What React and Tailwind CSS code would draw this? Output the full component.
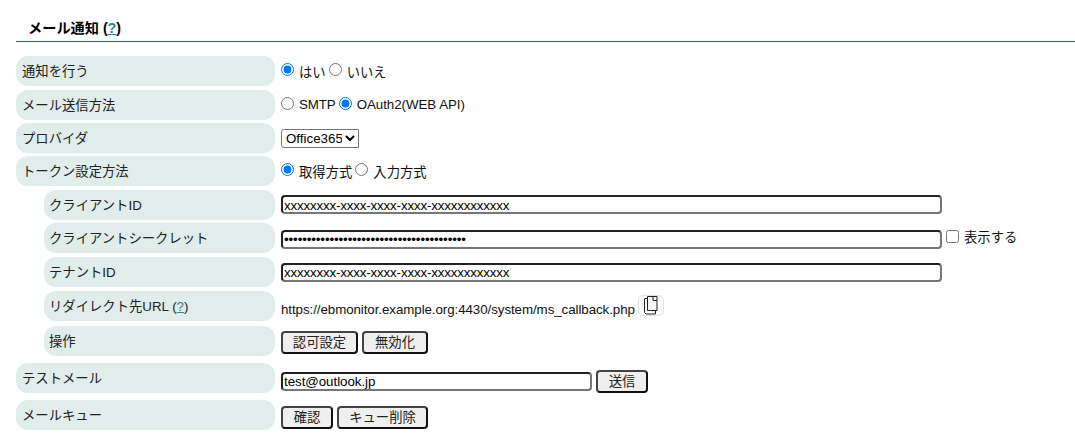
import React from 'react';

const fontStack = '[font-family:"Liberation_Sans","Noto_Sans_CJK_JP",sans-serif]';

const Help = () => <a href="#" className="text-[#1f8a94] underline">?</a>;

const Row = ({ label, sub, className = '', children }) => (
    <div className={`flex h-[30px] items-center ${className}`}>
        <div className={`h-full flex items-center rounded-[12px] bg-[#e0edeb] pt-[2px] text-[#222] ${sub ? 'ml-[28px] w-[231px] pl-[5px]' : 'w-[259px] pl-[6px]'}`}>
            {label}
        </div>
        <div className="ml-[6px] flex items-center text-[#111]">{children}</div>
    </div>
);

const Radio = ({ name, checked, className = '' }) => (
    <input type="radio" name={name} defaultChecked={checked} className={`h-[13px] w-[13px] ${className}`} />
);

const Btn = ({ children, className = '' }) => (
    <button className={`h-[23px] rounded-[4px] border-2 border-t-[#444] border-l-[#444] border-r-[#111] border-b-[#111] bg-[#efefef] text-[13.33px] text-[#222] ${className}`}>
        {children}
    </button>
);

const TextBox = ({ value, type = 'text', className = '' }) => (
    <input
        type={type}
        defaultValue={value}
        className={`h-[19px] rounded-[4px] border-2 border-t-[#222] border-l-[#222] border-r-[#767676] border-b-[#767676] pl-px pt-[2px] text-[13.33px] text-black outline-none ${className}`}
    />
);

const CopyIcon = () => (
    <svg width="14" height="19" viewBox="0 0 14 19" fill="none" stroke="#222" strokeWidth="1">
        <path d="M3.5 .5h9.5v14h-9.5z" fill="#f5f5f7" />
        <path d="M9 .5v4h4" />
        <path d="M3.5 2.5h-2.5a.5 .5 0 0 0 -.5 .5v13.5l1.5 1.5h9.5v-3" />
    </svg>
);

export default function App() {
    return (
        <div className={`h-[438px] w-[1075px] overflow-hidden bg-white text-[13.33px] ${fontStack}`}>
            <div className="ml-[16px] h-[42px] border-b border-[#35605a] pl-[12px] pt-[19px] text-[14.2px] font-bold leading-[18px] text-black">
                メール通知 (<Help />)
            </div>
            <div className="ml-[16px] pt-[14px]">
                <Row label="通知を行う">
                    <Radio name="notify" checked className="-mt-[2px]" />
                    <span className="ml-[5px] mr-[3px] mt-[4px]">はい</span>
                    <Radio name="notify" className="-mt-[2px]" />
                    <span className="ml-[5px] mt-[4px]">いいえ</span>
                </Row>
                <Row label="メール送信方法" className="mt-[4px]">
                    <Radio name="method" className="-mt-[2px]" />
                    <span className="ml-[5px] mr-[3px] tracking-[-0.1px]">SMTP</span>
                    <Radio name="method" checked className="-mt-[2px]" />
                    <span className="ml-[5px] tracking-[-0.04px]">OAuth2(WEB API)</span>
                </Row>
                <Row label="プロバイダ" className="mt-[3px]">
                    <select className="h-[19px] w-[78px] rounded-[3px] rounded-r-none border border-[#767676] bg-white text-[13.33px] text-black">
                        <option>Office365</option>
                    </select>
                </Row>
                <Row label="トークン設定方法" className="mt-[3px]">
                    <Radio name="token" checked className="-mt-[2px]" />
                    <span className="ml-[5px] mr-[3px] mt-[4px]">取得方式</span>
                    <Radio name="token" className="-mt-[2px]" />
                    <span className="ml-[5px] mt-[4px]">入力方式</span>
                </Row>
                <Row sub label="クライアントID" className="mt-[4px]">
                    <TextBox className="-mt-px w-[661px] tracking-[-0.16px]" value="xxxxxxxx-xxxx-xxxx-xxxx-xxxxxxxxxxxx" />
                </Row>
                <Row sub label="クライアントシークレット" className="mt-[3px]">
                    <TextBox className="mt-[2px] w-[661px] tracking-[-0.12px]" type="password" value="xxxxxxxxxxxxxxxxxxxxxxxxxxxxxxxxxxxxxxxx" />
                    <input type="checkbox" className="ml-[4px] -mt-[4px] h-[13px] w-[13px]" />
                    <span className="ml-[5px]">表示する</span>
                </Row>
                <Row sub label="テナントID" className="mt-[4px]">
                    <TextBox className="w-[661px] tracking-[-0.16px]" value="xxxxxxxx-xxxx-xxxx-xxxx-xxxxxxxxxxxx" />
                </Row>
                <Row sub label={<span>リダイレクト先URL (<Help />)</span>} className="mt-[4px]">
                    <span className="mt-[8px] tracking-[-0.07px]">https://ebmonitor.example.org:4430/system/ms_callback.php</span>
                    <button className="ml-[3px] flex h-[21px] w-[26px] items-center justify-center rounded-[5px] border border-[#e4e4e4] bg-[#fbfbfb]">
                        <CopyIcon />
                    </button>
                </Row>
                <Row sub label="操作" className="mt-[5px]">
                    <div className="mt-[2px] flex gap-[4px]">
                        <Btn className="w-[77px]">認可設定</Btn>
                        <Btn className="w-[66px]">無効化</Btn>
                    </div>
                </Row>
                <Row label="テストメール" className="mt-[7px]">
                    <TextBox className="mt-[6px] w-[311px] tracking-[-0.05px]" value="test@outlook.jp" />
                    <Btn className="ml-[4px] mt-[6px] w-[52px]">送信</Btn>
                </Row>
                <Row label="メールキュー" className="mt-[7px]">
                    <div className="mt-[4px] flex gap-[4px]">
                        <Btn className="w-[52px]">確認</Btn>
                        <Btn className="w-[91px]">キュー削除</Btn>
                    </div>
                </Row>
            </div>
        </div>
    );
}
